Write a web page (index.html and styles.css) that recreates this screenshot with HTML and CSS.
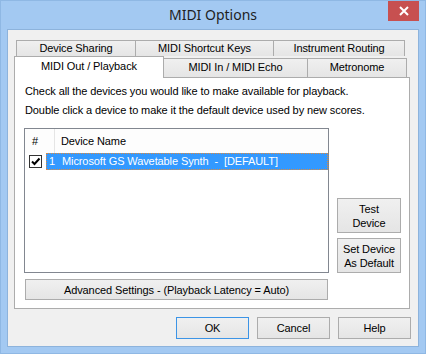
FILE: index.html
```html
<!DOCTYPE html>
<html lang="en">
  <head>
    <meta charset="UTF-8" />
    <title>MIDI Options</title>
    <link rel="stylesheet" href="styles.css">
  </head>
  <body>
    <div class="window">
      <div class="titlebar">
        <span></span>
        <span class="title">MIDI Options</span>
        <button class="close">
          <svg width="10" height="10" viewBox="0 0 10 10">
            <path d="M1 1 L9 9 M9 1 L1 9" stroke="#fff" stroke-width="2" />
          </svg>
        </button>
      </div>

      <div class="client">
        <div class="tabs">
          <div class="tab-row back">
            <div class="tab" style="width:120px">Device Sharing</div>
            <div class="tab" style="width:139px">MIDI Shortcut Keys</div>
            <div class="tab" style="width:132px">Instrument Routing</div>
          </div>
          <div class="tab-row front">
            <div class="tab selected" style="width:150px">MIDI Out / Playback</div>
            <div class="tab" style="width:145px">MIDI In / MIDI Echo</div>
            <div class="tab" style="width:100px">Metronome</div>
          </div>

          <div class="panel">
            <p class="hint">Check all the devices you would like to make available for playback.</p>
            <p class="hint">Double click a device to make it the default device used by new scores.</p>

            <div class="device-area">
              <div class="list">
                <div class="list-head">
                  <div class="col-num">#</div>
                  <div class="col-name">Device Name</div>
                </div>
                <div class="list-row">
                  <span class="check">
                    <svg width="11" height="11" viewBox="0 0 11 11">
                      <path d="M2 5.5 L4.5 8 L9.5 2.5" stroke="#000" stroke-width="2" fill="none" />
                    </svg>
                  </span>
                  <span class="row-sel">
                    <span class="row-num">1</span>
                    <span>Microsoft GS Wavetable Synth&nbsp; -&nbsp; [DEFAULT]</span>
                  </span>
                </div>
              </div>

              <div class="side-buttons">
                <button class="btn tall">Test<br>Device</button>
                <button class="btn tall">Set Device<br>As Default</button>
              </div>
            </div>

            <button class="btn advanced">Advanced Settings - (Playback Latency = Auto)</button>
          </div>
        </div>

        <div class="dialog-buttons">
          <button class="btn default">OK</button>
          <button class="btn">Cancel</button>
          <button class="btn">Help</button>
        </div>
      </div>
    </div>
  </body>
</html>
```

FILE: styles.css
```css
body {
  margin: 0;
  font-family: "Liberation Sans", Arial, sans-serif;
  font-size: 11px;
  letter-spacing: -0.1px;
  color: #000;
}

.window {
  width: 426px;
  height: 354px;
  background-color: #a3c9f2;
  box-sizing: border-box;
  border: 1px solid #8fb8e4;
}

.titlebar {
  height: 28px;
  display: grid;
  grid-template-columns: 1fr auto 1fr;
  padding: 0 6px 0 6px;
}

.title {
  font-family: "Noto Sans", sans-serif;
  font-size: 14px;
  letter-spacing: 0;
  line-height: 28px;
  color: #1e1e1e;
}

.close {
  justify-self: end;
  width: 31px;
  height: 20px;
  border: none;
  padding: 0;
  background-color: #c75050;
  display: flex;
  align-items: center;
  justify-content: center;
}

.client {
  margin: 0 6px;
  height: 318px;
  box-sizing: border-box;
  border: 1px solid #8db3dc;
  background-color: #f0f0f0;
}

.tabs {
  margin: 10px 0 0 6px;
  width: 396px;
}

.tab-row {
  display: flex;
}

.tab-row.back {
  padding-left: 2px;
  height: 16px;
}

.tab-row.front {
  height: 21px;
  position: relative;
  z-index: 1;
}

.tab {
  box-sizing: border-box;
  border: 1px solid #acacac;
  border-bottom: none;
  margin-left: -1px;
  background: linear-gradient(#f0f0f0, #e5e5e5);
  text-align: center;
  line-height: 15px;
}

.tab-row.back .tab:first-child {
  margin-left: 0;
}

.tab-row.front .tab {
  margin-top: 2px;
  height: 19px;
  line-height: 17px;
}

.tab-row.front .tab.selected {
  margin: 0;
  height: 22px;
  background: #fff;
  line-height: 19px;
}

.panel {
  box-sizing: border-box;
  height: 232px;
  border: 1px solid #acacac;
  background-color: #fff;
  padding: 4px 0 0 10px;
}

.hint {
  margin: 0;
  line-height: 19px;
}

.device-area {
  display: flex;
  align-items: flex-end;
  margin-top: 8px;
  margin-left: -1px;
}

.list {
  width: 305px;
  height: 145px;
  box-sizing: border-box;
  border: 1px solid #828790;
}

.list-head {
  display: flex;
  height: 24px;
  line-height: 24px;
  background-color: #fdfdfd;
}

.col-num {
  width: 30px;
  padding-left: 7px;
  box-sizing: border-box;
  border-right: 1px solid #e5e5e5;
}

.col-name {
  padding-left: 6px;
}

.list-row {
  display: flex;
  align-items: center;
  height: 17px;
}

.check {
  width: 13px;
  height: 13px;
  box-sizing: border-box;
  border: 1px solid #333;
  background-color: #fff;
  margin: 0 4px 0 4px;
  display: flex;
  align-items: center;
  justify-content: center;
}

.row-sel {
  flex: 1;
  height: 17px;
  box-sizing: border-box;
  background-color: #3399ff;
  border: 1px dotted #e08a3c;
  color: #fff;
  line-height: 15px;
  padding-left: 2px;
  display: flex;
}

.row-num {
  width: 13px;
}

.side-buttons {
  display: flex;
  flex-direction: column;
  gap: 5px;
  margin-left: 8px;
}

.btn {
  font-family: "Liberation Sans", Arial, sans-serif;
  font-size: 11px;
  letter-spacing: -0.1px;
  color: #000;
  box-sizing: border-box;
  border: 1px solid #acacac;
  background: linear-gradient(#f0f0f0, #e5e5e5);
  padding: 0;
  width: 73px;
  height: 22px;
}

.btn.tall {
  width: 64px;
  height: 35px;
  line-height: 14px;
}

.btn.advanced {
  width: 303px;
  height: 21px;
  margin-top: 6px;
}

.btn.default {
  border-color: #3c94e6;
}

.dialog-buttons {
  display: flex;
  justify-content: flex-end;
  gap: 8px;
  margin-top: 8px;
  padding-right: 7px;
}
```
